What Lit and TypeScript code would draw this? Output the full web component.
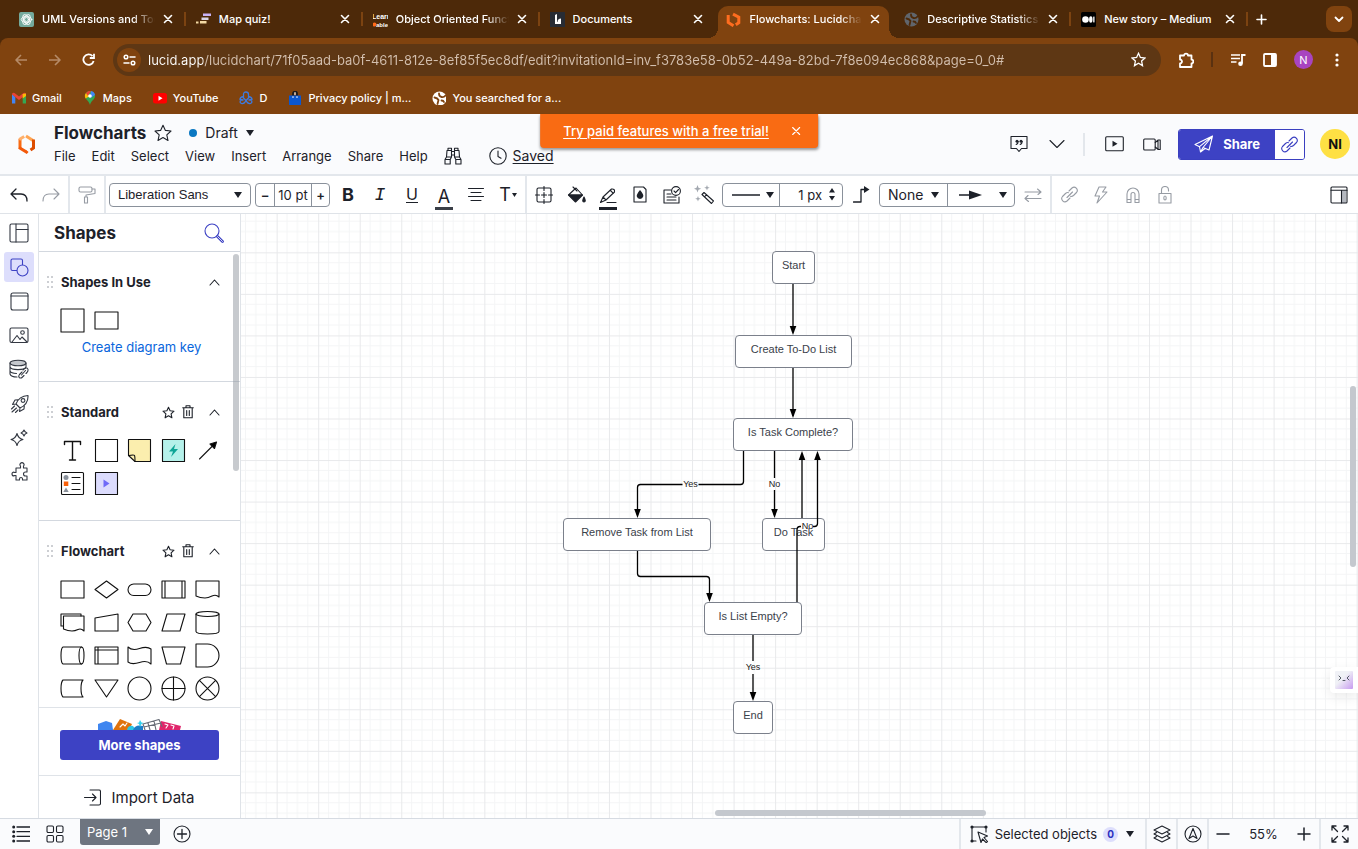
import { LitElement, html, svg, css, SVGTemplateResult } from "lit";
import { customElement, state } from "lit/decorators.js";

type Glyph = SVGTemplateResult;

/* Draws a glyph whose coordinates are in CSS pixels. */
const icon = (glyph: Glyph, w = 20, h = w) => html`<svg
  class="icon" width=${w} height=${h} viewBox="0 0 ${w} ${h}" aria-hidden="true">${glyph}</svg>`;

const base = css`
  :host { display: block; font-family: Inter, "Liberation Sans", sans-serif; color: #1d2129; font-size: 13px; }
  * { box-sizing: border-box; }
  button, input, select { font: inherit; color: inherit; background: none; border: 0; margin: 0; padding: 0; }
  button { display: flex; align-items: center; justify-content: center; cursor: pointer; }
  a { color: inherit; }
  .icon { display: block; flex: none; fill: none; stroke: currentColor; stroke-width: 1.1; stroke-linejoin: round; stroke-linecap: round; }
`;

/* ---------- glyphs ---------- */
const g = {
  close: svg`<path d="M1.500 1.500l7 7M8.500 1.500l-7 7" stroke-width="1.6"/>`,
  closeThin: svg`<path d="M1.500 1.500l7 7M8.500 1.500l-7 7" stroke-width="1.1"/>`,
  plus: svg`<path d="M5.500 1v9M1 5.500h9" stroke-width="1.6"/>`,
  chevDown: svg`<path d="M1.500 1.500L5 5l3.500-3.500" stroke-width="1.8"/>`,
  back: svg`<path d="M13 7H2M7 2L2 7l5 5" stroke-width="1.6" stroke-linecap="butt"/>`,
  forward: svg`<path d="M1 7h11M7 2l5 5-5 5" stroke-width="1.6" stroke-linecap="butt"/>`,
  reload: svg`<path d="M11.600 8A5.200 5.200 0 1 1 10.500 3.200M12 .8v4.200H7.800" stroke-width="1.8" stroke-linecap="butt" stroke-linejoin="miter"/>`,
  tune: svg`<g stroke-width="1.5"><circle cx="3" cy="3" r="1.800"/><path d="M7 3h5"/><circle cx="10" cy="9" r="1.800"/><path d="M1 9h5"/></g>`,
  starBar: svg`<path d="M7.500 1.300l1.900 4.200 4.600.5-3.400 3.100.9 4.500-4-2.300-4 2.300.9-4.500L1 6l4.600-.5z" stroke-width="1.300" stroke-linejoin="miter"/>`,
  puzzle: svg`<path d="M2 3.500h4a2 1.800 0 0 1 4 0H13.500V7.500a1.800 2 0 0 1 0 4V15H2v-3.500a2 2 0 0 0 0-4z" stroke-width="1.800"/>`,
  media: svg`<path d="M1 2h9M1 5.500h9M1 9h5.500" stroke-width="1.7" stroke-linecap="butt"/><path d="M12 10.500V2h3.500" stroke-width="1.8" stroke-linecap="butt" stroke-linejoin="miter"/><circle cx="10.500" cy="10.700" r="2.300" fill="currentColor" stroke="none"/>`,
  side: svg`<rect x="1" y="1" width="12" height="12" rx="1" stroke-width="1.800"/><path d="M8 1h5v12H8z" fill="currentColor" stroke="none"/>`,
  dots: svg`<g fill="currentColor" stroke="none"><circle cx="2" cy="2" r="1.600"/><circle cx="2" cy="7" r="1.600"/><circle cx="2" cy="12" r="1.600"/></g>`,
  lucid: svg`<g stroke="#ff6d1f" stroke-width="3" stroke-linejoin="miter" stroke-linecap="butt"><path d="M2.200 3v7.500l5.300 3.300"/><path d="M7 2.200l5.800 3v5.500l-3 2"/></g>`,
  caret: svg`<path d="M0 0h8L4 6z" fill="currentColor" stroke="none"/>`,
  star: svg`<path d="M9 1.200l2.400 5.200 5.600.6-4.200 3.800 1.200 5.700-5-2.900-5 2.900 1.200-5.700L1 7l5.600-.6z"/>`,
  binoc: svg`<path d="M4 3.500V1.200h3.500v2.300M10.500 3.500V1.200H14v2.300M3 3.500h4.500v6.500H2.500zM10.500 3.500H15l.5 6.500h-5zM7.500 4.500h3M7.500 8h3M2.500 10L1 12.500M15.500 10l1.500 2.500M1 12.500h5.200v4.500H1zM11.800 12.500H17v4.500h-5.200zM6.200 12.500L7.500 10M11.800 12.500L10.500 10"/>`,
  clock: svg`<circle cx="9" cy="9" r="8.200"/><path d="M9 4v5.500l3 1.800"/>`,
  comment: svg`<path d="M1 1.500h16v12h-5.500L9 16.500l-2.500-3H1z"/><g fill="currentColor" stroke="none"><circle cx="7" cy="6.200" r="1.500"/><circle cx="11" cy="6.200" r="1.500"/></g><path d="M8.200 6.500q0 2-2 3M12.200 6.500q0 2-2 3" />`,
  chev: svg`<path d="M1 1.500l7 7 7-7"/>`,
  play: svg`<rect x=".7" y=".7" width="17.600" height="14" rx="1"/><path d="M7.500 4.700v6l5-3z" fill="currentColor" stroke="none"/>`,
  camera: svg`<rect x=".7" y="2" width="11.500" height="11" rx="1"/><path d="M12.200 5.500l3-2.500h2v9.500h-2l-3-2.500M15 3v9.500"/>`,
  plane: svg`<path d="M18.500 1L1 9.500l4.500 2.200L18.500 1l-3.500 14-6-2.500L18.500 1M5.500 11.700l1 5.300 2.500-4.500M6.500 17l4.500-3.500"/>`,
  link: svg`<path d="M6 11.500l5.500-5.500M8 5l3-3a3.200 3.200 0 0 1 4.500 4.500l-3 3q-1.500 1.300-3 .8M9 12l-3 3a3.200 3.200 0 0 1-4.500-4.500l3-3q1.500-1.300 3-.8"/>`,
  undo: svg`<path d="M6 1L1 6l5 5M1.500 6H11q6 0 6 7" stroke-width="1.300"/>`,
  redo: svg`<path d="M12 1l5 5-5 5M16.500 6H7q-6 0-6 7"/>`,
  paint: svg`<rect x="1" y="1" width="13" height="5" rx="1.500"/><path d="M14 3h3v4.500l-9 1.500v2M6.500 11h3v6h-3z"/>`,
  align: svg`<path d="M.5 1.500h15M3 5.500h10M.5 9.500h15M3 13.500h10"/>`,
  frame: svg`<rect x="2" y="2" width="14" height="14" rx="1.500"/><path d="M9 .5v4M9 13.500v4M.5 9h4M13.500 9h4M9 6.500v5M6.500 9h5"/>`,
  fill: svg`<path d="M1.500 9L9 2l6.500 7z"/><path d="M1.500 9h14L8.500 16z" fill="currentColor"/><path d="M6 1l4 4M17 11q2.500 5 0 5t0-5" fill="currentColor"/>`,
  pen: svg`<path d="M1.500 14.500L4 9l8.500-8q3.500-.5 3 3L7 12zM4 9l3 3M11.500 2.500l2.800 2.800M8 14.500h9"/><path d="M0 20.500h18" stroke-width="3" stroke-linecap="butt"/>`,
  drop: svg`<path d="M1 1h9.500L13 3.500V16H1z"/><path d="M7 4q4 4.500 3.200 6.500a3.300 3.300 0 0 1-6.400 0Q3.200 8.500 7 4z" fill="currentColor" stroke="none"/>`,
  task: svg`<path d="M8 4H1v13h15v-6M4 8h4M4 11h9M4 14h9"/><circle cx="13" cy="5" r="4.400"/><path d="M11 5l1.600 1.600L15.500 3.500"/>`,
  wand: svg`<path d="M8 9.500L10 7.500l9.500 8.500-2 2.500zM10.500 12l2-2.300"/><g fill="#a3a8b0" stroke="none"><path d="M3.500 0l1 2.700L7.200 3.700l-2.700 1L3.500 7.500l-1-2.800L0 3.700l2.500-1zM13 0l.7 2 2 .7-2 .8-.7 2-.8-2-2-.8 2-.7zM4 11l.7 2 2 .7-2 .8L4 16.500l-.8-2-2-.8 2-.7z"/></g>`,
  line: svg`<path d="M0 1h28" stroke-width="1.300"/>`,
  spin: svg`<path d="M0 4.500h6L3 0zM0 8h6l-3 4.500z" fill="currentColor" stroke="none"/>`,
  elbow: svg`<path d="M.5 16H8V3.500h5" stroke-width="1.300"/><path d="M11 0l5.500 3.500L11 7z" fill="currentColor" stroke="none"/>`,
  arrow: svg`<path d="M0 5h12" stroke-width="1.600"/><path d="M10 .5L23 5 10 9.500z" fill="currentColor" stroke="none"/>`,
  swap: svg`<path d="M1 4h16l-3.500-3M17 4l-3 2.500M17 10.500H1l3-3M1 10.500l3.500 3"/>`,
  bolt: svg`<path d="M6 1h7L9.500 6H14L4 17l2.500-7H2z"/>`,
  magnet: svg`<path d="M1 15.500V7a6 6 0 0 1 12 0v8.500H9V7.500a2 2 0 0 0-4 0v8zM1 12.500h4M9 12.500h4"/>`,
  lock: svg`<rect x="1" y="7.500" width="12" height="9.500"/><path d="M3.500 7.500V4a3.500 3.500 0 0 1 7 0v1"/><ellipse cx="7" cy="12" rx="1.200" ry="2"/>`,
  dock: svg`<path d="M12 4.500h4V17h-4z" fill="#b4b8bf" stroke="none"/><rect x="1" y="1" width="16" height="16" rx="1"/><path d="M1 4.200h16M11.500 4.200V17"/>`,
  template: svg`<rect x="1" y="1" width="18" height="18" rx="1.500"/><path d="M7 1v18M7 6.500h12"/>`,
  shapes: svg`<rect x="1" y="1" width="11.500" height="11.500" rx="1.500"/><circle cx="12.500" cy="12.500" r="5.500" fill="#dddefc"/>`,
  container: svg`<rect x="1" y="1" width="17" height="17" rx="2"/><path d="M1 4h17"/>`,
  image: svg`<rect x="1" y="1" width="18" height="14.500" rx="1.500"/><path d="M3 15l5-6.500 3 4 2-2.500 5 5"/><circle cx="13.500" cy="5.500" r="1.800"/>`,
  data: svg`<ellipse cx="9" cy="4" rx="8" ry="2.800" fill="#c5c8cd"/><path d="M1 4v11q1 3 7 3M17 4v4M1 8q1 2.600 8 2.600t8-2.600M1 12q1 2.300 6.500 2.500"/><path d="M12.500 16l4-4.500M14 11l1.500-1.500q3-1.500 3.500 1 .3 1.500-1 3l-1 1M13 13l-2.500 2.500q-1.500 2 0 3.200 1.500.9 3-.7l1.500-1.500"/>`,
  rocket: svg`<path d="M6 10Q9 2 18 1.500 18.500 10 10 14zM6 10l-3.500.5L5 6l3-.3M10 14l-.5 3.500L14 15l.3-3M1.500 15l3-3M2 18l4.500-4M5.500 18.500L8 16"/><circle cx="13" cy="6.500" r="1.900"/>`,
  spark: svg`<path d="M7 4.500q1.200 5 6 6-4.800 1-6 6-1.200-5-6-6 4.800-1 6-6zM14 1q.6 2.200 3 3-2.400.8-3 3-.6-2.200-3-3 2.400-.8 3-3z"/>`,
  plugin: svg`<path d="M6 6h4.500V4a2 2 0 1 1 3 0v2H17v4h-1.500a2 2 0 1 0 0 4H17v4h-4.500v-1a1.500 1.500 0 1 0-3 0v1H6v-4.500H4v.5a1.800 1.800 0 1 1 0-4v.5h2z"/>`,
  search: svg`<circle cx="8" cy="8" r="7"/><path d="M13.500 13.500l5 5" stroke-width="2.800"/><path d="M13.500 13.500l5 5" stroke="#fff" stroke-width=".8"/>`,
  grip: svg`<g fill="#8d939c" stroke="none">${[1, 6, 11].map((y) => svg`<circle cx="1" cy=${y} r=".8"/><circle cx="5" cy=${y} r=".8"/>`)}</g>`,
  starSmall: svg`<path d="M6.500 1.200l1.600 3.600 3.900.4-2.900 2.700.8 3.900-3.400-2-3.400 2 .8-3.900L1 5.200l3.900-.4z"/>`,
  trash: svg`<path d="M.7 2.700h10.600M4 2.700V.8h4v1.900M1.800 2.700v10h8.400v-10M4.700 5.500v5M7.300 5.500v5"/>`,
  up: svg`<path d="M1 6l4.500-5L10 6"/>`,
  import: svg`<path d="M.5 8.500H12M8.500 5l3.500 3.500L8.500 12M6 1h9q1.500 0 1.500 1.500v12q0 1.500-1.500 1.500H6"/>`,
  list: svg`<path d="M5 2h13M5 6.700h13M5 11.300h13M5 16h13" stroke-width="1.300"/><g fill="currentColor" stroke="none"><circle cx="1.700" cy="2" r="1.500"/><circle cx="1.700" cy="6.700" r="1.500"/><circle cx="1.700" cy="11.300" r="1.500"/><circle cx="1.700" cy="16" r="1.500"/></g>`,
  tiles: svg`<rect x="1" y="1" width="6.500" height="6.500" rx="1.200"/><rect x="10.500" y="1" width="6.500" height="6.500" rx="1.200"/><rect x="1" y="10.500" width="6.500" height="6.500" rx="1.200"/><rect x="10.500" y="10.500" width="6.500" height="6.500" rx="1.200"/>`,
  addRound: svg`<circle cx="9" cy="9" r="8"/><path d="M9 4.500v9M4.500 9h9" stroke-width="1.300"/>`,
  select: svg`<path d="M6 16H2V2h14v5"/><path d="M8 7l9.500 4-3.500 1.500 3.500 4-1.300 1.200-3.700-3.700-1.500 3.500z"/><g fill="currentColor" stroke="none"><circle cx="2" cy="2" r="1.600"/><circle cx="16" cy="2" r="1.600"/><circle cx="2" cy="16" r="1.600"/></g>`,
  layers: svg`<path d="M9 1l8 4-8 4-8-4zM3.500 7.500L1 9l8 4 8-4-2.500-1.500M3.500 11.500L1 13l8 4 8-4-2.500-1.500"/>`,
  compass: svg`<circle cx="9" cy="9" r="8"/><path d="M9 3.500l4 10-4-2.500-4 2.500z"/>`,
  minus: svg`<path d="M1 7h12" stroke-width="1.500"/>`,
  plusBig: svg`<path d="M1 7h12M7 1v12" stroke-width="1.500"/>`,
  full: svg`<path d="M1 5V1h4M1 1l5.500 5.500M13 1h4v4M17 1l-5.500 5.500M1 13v4h4M1 17l5.500-5.500M17 13v4h-4M17 17l-5.500-5.500" stroke-width="1.300"/>`,
  globe: svg`<circle cx="7.500" cy="7.500" r="7" fill="currentColor" stroke="none"/><path d="M2.500 6.500q3 .5 4 2.500l-1 4M7 2.500q0 3 2.500 3.500t4-1.500M9.500 9.500q2 0 2.500 1.500" stroke="var(--cut)" stroke-width="1.800" fill="none"/>`,
};

const fav = {
  gpt: svg`<rect width="15" height="15" rx="2" fill="#74aa9c" stroke="none"/><g stroke="#fff" stroke-width=".9"><circle cx="7.500" cy="7.500" r="2"/><ellipse cx="7.500" cy="7.500" rx="5.300" ry="3"/><ellipse cx="7.500" cy="7.500" rx="5.300" ry="3" transform="rotate(60 7.500 7.500)"/><ellipse cx="7.500" cy="7.500" rx="5.300" ry="3" transform="rotate(120 7.500 7.500)"/></g>`,
  quiz: svg`<g stroke="none"><rect x="7" y="1.500" width="8.500" height="2.500" fill="#c9b2f5"/><rect x="5.500" y="5.500" width="7" height="2.500" fill="#d7d3e6"/><rect x="4" y="9" width="6.500" height="2.500" fill="#f3d9a4"/><rect x="0" y="9.500" width="2.500" height="2" fill="#f3d9a4"/></g>`,
  learn: svg`<g fill="#fff" stroke="none" font-family="Liberation Sans, sans-serif" font-weight="700" font-size="7"><text x="-1" y="7">Learn</text><text x="3" y="14.500" font-size="6">able</text></g><circle cx="1.500" cy="12.500" r="2" fill="#ff6a1a" stroke="none"/>`,
  docs: svg`<rect width="15" height="15" fill="#282c34" stroke="none"/><path d="M5 3l2-1v8H5zM7.500 10q0-3.500 3.500-3.500V12H5V9.500z" fill="#fff" stroke="none"/>`,
  medium: svg`<rect width="15" height="15" rx="1.500" fill="#000" stroke="none"/><g fill="#fff" stroke="none"><circle cx="4.500" cy="7.500" r="3.300"/><ellipse cx="9.800" cy="7.500" rx="1.700" ry="3.200"/><rect x="12.200" y="4.600" width="1.300" height="5.800"/></g>`,
  gmail: svg`<g stroke="none"><path d="M0 3v9.500h3.300V6z" fill="#4285f4"/><path d="M10.700 6v6.500H14V3z" fill="#34a853"/><path d="M0 3.500Q0 1 2.500 2L7 5.500 11.500 2Q14 1 14 3.500L7 9z" fill="#ea4335"/><path d="M10.700 3L14 2.500V5l-3.300 2.500z" fill="#fbbc04"/></g>`,
  maps: svg`<g stroke="none"><path d="M7 0a5 5 0 0 1 5 5c0 3.500-4 4.500-5 9-1-4.500-5-5.500-5-9a5 5 0 0 1 5-5z" fill="#34a853"/><path d="M2.500 7.500A5 5 0 0 1 3 2l4 3z" fill="#fbbc04"/><path d="M3 2a5 5 0 0 1 5-2L5 5z" fill="#ea4335"/><path d="M8 0a5 5 0 0 1 4 4L7 7.500z" fill="#4285f4"/><circle cx="7" cy="5" r="1.800" fill="#fff"/></g>`,
  youtube: svg`<g stroke="none"><rect y="2" width="14" height="10.500" rx="2.500" fill="#f00"/><path d="M5.500 4.700v5l4-2.500z" fill="#fff"/></g>`,
  knot: svg`<g stroke="#3c7be0" stroke-width="1.300"><path d="M4.500 7V3.500Q4.500 1 7 1t2.500 2.500V7M9.500 5.500q3.500.5 3.500 3L10 9M4.500 5.500Q1 6 1 8.500L4 9M7 9.500q-2 4-4.500 3T2 9M7 9.500q2 4 4.500 3T12 9M5 7.500l2 2 2-2"/></g>`,
  bag: svg`<path d="M5 5V2.500a2 2 0 0 1 4 0V5" stroke="#1b1b1f" stroke-width="1.800"/><path d="M1 4.500h12V14H1z" fill="#0b57d0" stroke="none"/><path d="M4.500 6h1M8.500 6h1M7 1.500v2" stroke="#fff"/>`,
};

/* ---------- browser window chrome ---------- */
@customElement("browser-chrome")
class BrowserChrome extends LitElement {
  static styles = [base, css`
    :host { --frame: #4d2909; --bar: #80430f; --cut: #4d2909; background: var(--frame); color: #fff; font-size: 11px; font-weight: 500; }
    .strip { display: flex; height: 38px; padding: 6px 0 0 9px; }
    .tabs { display: flex; flex: 1; min-width: 0; }
    .tab { position: relative; flex: 1 1 0; min-width: 0; display: flex; align-items: center; gap: 8px; padding: 0 13px 6px 10px; }
    .tab::after { content: ""; position: absolute; right: 0; top: 6px; width: 2px; height: 14px; background: #7c4311; }
    .tab.bare::after { display: none; }
    .tab.active { margin: 0 5px 0 2px; padding: 0 9px 6px 8px; background: var(--bar); border-radius: 10px 10px 0 0; }
    .tab.active::before, .tab.active::after { content: ""; position: absolute; display: block; top: auto; bottom: 0; width: 10px; height: 10px; background: radial-gradient(circle at 0 0, transparent 10px, var(--bar) 10px); }
    .tab.active::before { left: -10px; }
    .tab.active::after { right: -10px; background: radial-gradient(circle at 100% 0, transparent 10px, var(--bar) 10px); }
    .title { flex: 1; min-width: 0; overflow: hidden; white-space: nowrap; line-height: 18px; }
    .title.fade { mask-image: linear-gradient(90deg, #000 80%, transparent); }
    .end { flex: 0 0 110px; display: flex; justify-content: space-between; padding: 0 6px 6px 8px; align-items: center; }
    .more { width: 26px; height: 26px; border-radius: 8px; background: var(--bar); }
    .gray { color: #60656c; }
    .bar { background: var(--bar); border-radius: 8px 8px 0 0; height: 43px; display: flex; align-items: center; padding: 0 19px 0 14px; }
    .nav { display: flex; gap: 20px; align-items: center; color: #b58b68; }
    .nav button:last-child { color: #fff; }
    .omni { flex: 1; margin: 0 17px 0 18px; height: 32px; border-radius: 16px; background: #5e3714; display: flex; align-items: center; padding: 0 15px 0 4px; }
    .site { width: 24px; height: 24px; border-radius: 12px; background: var(--bar); margin-right: 7px; }
    .url { flex: 1; min-width: 0; font-size: 13px; font-weight: 400; height: 24px; outline: 0; color: #dac8b9;
      background: linear-gradient(90deg, #fff 55px, #d3bfae 55px); background-clip: text; -webkit-background-clip: text; -webkit-text-fill-color: transparent; }
    .rule { width: 2px; height: 15px; background: #5a3110; }
    .tools { display: flex; align-items: center; gap: 17px; }
    .me { width: 19px; height: 19px; border-radius: 10px; background: #a844c0; font-weight: 400; }
    .tools .kebab { margin-left: 5px; }
    .marks { background: var(--bar); --cut: var(--bar); height: 33px; display: flex; align-items: center; gap: 21px; padding: 0 12px; }
    .mark { display: flex; align-items: center; gap: 6px; text-decoration: none; line-height: 18px; }
  `];
  render() {
    const tabs: [string, Glyph, string][] = [
      ["UML Versions and Too", fav.gpt, "fade"], ["Map quiz!", fav.quiz, ""],
      ["Object Oriented Funct", fav.learn, "fade"], ["Documents", fav.docs, "bare"],
      ["Flowcharts: Lucidcha", g.lucid, "fade active"], ["Descriptive Statistics", g.globe, "fade gray"],
      ["New story – Medium", fav.medium, ""],
    ];
    const marks: [string, Glyph][] = [
      ["Gmail", fav.gmail], ["Maps", fav.maps], ["YouTube", fav.youtube], ["D", fav.knot],
      ["Privacy policy | m...", fav.bag], ["You searched for a...", g.globe],
    ];
    return html`
      <div class="strip">
        <div class="tabs">${tabs.map(([t, f, k]) => html`
          <div class="tab ${k.includes("active") ? "active" : ""} ${k === "bare" ? "bare" : ""}">
            <span class=${k.includes("gray") ? "gray" : ""}>${icon(f, 15)}</span>
            <span class="title ${k.includes("fade") ? "fade" : ""}">${t}</span>
            <button aria-label="Close ${t}">${icon(g.close, 10)}</button>
          </div>`)}</div>
        <div class="end"><button aria-label="New tab">${icon(g.plus, 11)}</button>
          <button class="more" aria-label="Search tabs">${icon(g.chevDown, 10, 7)}</button></div>
      </div>
      <div class="bar">
        <div class="nav"><button aria-label="Back">${icon(g.back, 14)}</button><button aria-label="Forward">${icon(g.forward, 14)}</button>
          <button aria-label="Reload">${icon(g.reload, 13)}</button></div>
        <div class="omni">
          <button class="site" aria-label="Site information">${icon(g.tune, 13, 12)}</button>
          <input class="url" aria-label="Address" .value=${"lucid.app/lucidchart/71f05aad-ba0f-4611-812e-8ef85f5ec8df/edit?invitationId=inv_f3783e58-0b52-449a-82bd-7f8e094ec868&page=0_0#"} />
          <button aria-label="Bookmark">${icon(g.starBar, 15)}</button>
        </div>
        <div class="tools">
          <button aria-label="Extensions">${icon(g.puzzle, 16)}</button><span class="rule"></span>
          <button aria-label="Media">${icon(g.media, 16, 14)}</button>
          <button aria-label="Side panel">${icon(g.side, 14)}</button>
          <button class="me" aria-label="Profile N">N</button>
          <button class="kebab" aria-label="Menu">${icon(g.dots, 4, 14)}</button>
        </div>
      </div>
      <div class="marks">${marks.map(([t, f]) => html`<a class="mark" href="#">${icon(f, 14)}${t}</a>`)}</div>`;
  }
}

/* ---------- document header ---------- */
@customElement("doc-header")
class DocHeader extends LitElement {
  static styles = [base, css`
    :host { position: relative; background: #fafbfd; border-bottom: 2px solid #e3e7ec; }
    .row { display: flex; align-items: center; height: 60px; padding: 0 8px 0 18px; }
    .main { margin-left: 18px; display: flex; flex-direction: column; gap: 3px; flex: 1; }
    .line { display: flex; align-items: center; height: 20px; }
    .title { font-size: 17px; font-weight: 700; margin: 0 8px 0 0; line-height: 20px; }
    .dot { width: 8px; height: 8px; border-radius: 4px; background: #0a78c2; margin: 0 8px 0 17px; }
    .draft { gap: 8px; font-size: 14px; }
    .menu { gap: 16px; }
    .saved { gap: 6px; text-decoration: underline; text-underline-offset: 2px; margin-left: 11px; font-size: 14px; }
    .right { display: flex; align-items: center; }
    .sep { width: 2px; height: 23px; background: #e3e7ec; margin: 0 20px 0 18px; }
    .share { display: flex; height: 31px; margin: 0 15px 0 17px; border: 1px solid #3a3fc0; border-radius: 3px; overflow: hidden; color: #3a3fc0; }
    .go { background: #3d42c4; color: #fff; gap: 9px; padding: 0 15px; font-weight: 700; }
    .copy { width: 29px; background: #fff; }
    .user { width: 30px; height: 30px; border-radius: 15px; background: #fee044; font-weight: 700; color: #111; }
    .chev { margin: 0 0 0 21px; }
    .cam { margin-left: 19px; }
    .banner { position: absolute; top: 0; left: 50%; transform: translateX(-50%); height: 34px; padding: 0 17px 0 23px; gap: 22px; background: #f96b13; color: #fff; border-radius: 0 0 4px 4px; box-shadow: 0 2px 3px #0006; display: flex; align-items: center; white-space: nowrap; font-weight: 500; }
    .banner a { text-underline-offset: 2px; }
  `];
  render() {
    return html`
      <header class="row">
        ${icon(svg`<g stroke-width="3" stroke-linejoin="miter" stroke-linecap="butt"><path d="M2 5v9.500" stroke="#f96b13"/><path d="M1 13.500l7.500 4.500 1-1" stroke="#f3590a"/><path d="M1.200 5.500l5-3" stroke="#ffb06b"/><path d="M8 2l7 4.500" stroke="#ffa552"/><path d="M15.500 5.500v8.500l-3 2" stroke="#dd4d00"/></g>`, 18, 20)}
        <div class="main">
          <div class="line"><h1 class="title">Flowcharts</h1><button aria-label="Favorite">${icon(g.star, 18)}</button>
            <span class="dot"></span><button class="draft">Draft ${icon(g.caret, 8, 6)}</button></div>
          <nav class="line menu">
            ${["File", "Edit", "Select", "View", "Insert", "Arrange", "Share", "Help"].map((m) => html`<button>${m}</button>`)}
            <button aria-label="Find">${icon(g.binoc, 18)}</button>
            <button class="saved">${icon(g.clock, 18)} <span>Saved</span></button>
          </nav>
        </div>
        <div class="right">
          <button aria-label="Comments">${icon(g.comment, 18)}</button>
          <button class="chev" aria-label="More">${icon(g.chev, 16, 10)}</button>
          <span class="sep"></span>
          <button aria-label="Present">${icon(g.play, 19, 16)}</button>
          <button class="cam" aria-label="Record">${icon(g.camera, 18, 15)}</button>
          <div class="share"><button class="go">${icon(g.plane, 20, 18)}Share</button>
            <button class="copy" aria-label="Copy link">${icon(g.link, 17)}</button></div>
          <button class="user" aria-label="Account NI">NI</button>
        </div>
      </header>
      <div class="banner"><a href="#">Try paid features with a free trial!</a>
        <button aria-label="Dismiss">${icon(g.closeThin, 10)}</button></div>`;
  }
}

/* ---------- formatting toolbar ---------- */
@customElement("format-bar")
class FormatBar extends LitElement {
  static styles = [base, css`
    :host { background: #fff; border-bottom: 1px solid #dfe3e8; }
    .bar { display: flex; align-items: stretch; height: 37px; padding-left: 3px; }
    .tool { width: 32px; }
    .off { color: #979ca4; }
    .sep { width: 2px; background: #e3e7ec; flex: none; margin: 0 1px; }
    .box { align-self: center; height: 24px; display: flex; flex: none; border: 1px solid #8a919b; border-radius: 4px; background: #fff; margin: 0 2px; }
    .box > * + * { border-left: 1px solid #8a919b; }
    .field { position: relative; display: flex; align-items: center; flex: none; }
    .field select { appearance: none; width: 100%; height: 100%; padding: 0 8px; outline: 0; }
    .field > .icon { position: absolute; right: 8px; pointer-events: none; }
    .font { width: 140px; font-family: "Liberation Sans", sans-serif; }
    .step { width: 18px; font-weight: 600; }
    .size { width: 37px; text-align: center; min-width: 0; }
    .line { width: 56px; gap: 6px; padding-left: 3px; }
    .width { width: 63px; display: flex; align-items: center; padding-right: 7px; }
    .width input { text-align: right; padding-right: 7px; flex: 1; min-width: 0; }
    .none { width: 67px; font-size: 14px; }
    .ends { width: 67px; gap: 17px; padding-left: 4px; }
    .big { font-size: 18px; font-weight: 400; line-height: 20px; }
    .b { font-weight: 700; }
    .i { font-style: italic; font-family: "Liberation Mono", monospace; }
    .u { border-bottom: 1px solid #1d2129; font-size: 16px; line-height: 16px; }
    .mark { border-bottom: 3px solid #3a3f47; width: 18px; text-align: center; margin-top: 8px; line-height: 20px; }
    .pen { padding-top: 8px; }
    .t { gap: 1px; }
    .last { margin-left: auto; width: 38px; }
  `];
  render() {
    const t = (label: string, body: unknown, cls = "") => html`<button class="tool ${cls}" aria-label=${label}>${body}</button>`;
    const caret = icon(g.caret, 8, 6);
    return html`<div class="bar" role="toolbar">
      ${t("Undo", icon(g.undo, 18, 14))}${t("Redo", icon(g.redo, 18, 14), "off")}<span class="sep"></span>
      ${t("Format painter", icon(g.paint, 18), "off")}<span class="sep"></span>
      <div class="box"><label class="field font"><select aria-label="Font"><option>Liberation Sans</option></select>${caret}</label></div>
      <div class="box"><button class="step">−</button><input class="size" aria-label="Font size" .value=${"10 pt"} /><button class="step">+</button></div>
      ${t("Bold", html`<span class="big b">B</span>`)}${t("Italic", html`<span class="big i">I</span>`)}
      ${t("Underline", html`<span class="big u">U</span>`)}${t("Text color", html`<span class="big mark">A</span>`)}
      ${t("Align", icon(g.align, 16, 15))}${t("Text options", html`<span class="big">T</span>${icon(svg`<path d="M0 0h5L2.500 4z" fill="currentColor" stroke="none"/>`, 5, 4)}`, "t")}
      <span class="sep"></span>
      ${t("Position", icon(g.frame, 18))}${t("Fill", icon(g.fill, 19, 17))}${t("Line color", icon(g.pen, 18, 22), "pen")}
      ${t("Opacity", icon(g.drop, 14, 17))}${t("Task card", icon(g.task, 18))}${t("Magic", icon(g.wand, 20))}
      <div class="box"><button class="line" aria-label="Line style">${icon(g.line, 28, 2)}${caret}</button>
        <div class="width"><input aria-label="Line width" .value=${"1 px"} />${icon(g.spin, 6, 13)}</div></div>
      ${t("Line shape", icon(g.elbow, 17))}
      <div class="box"><label class="field none"><select aria-label="Line start"><option>None</option></select>${caret}</label>
        <button class="ends" aria-label="Line end">${icon(g.arrow, 23, 10)}${caret}</button></div>
      ${t("Swap ends", icon(g.swap, 18, 14), "off")}
      <span class="sep"></span>
      ${t("Link", icon(g.link, 17), "off")}${t("Action", icon(g.bolt, 16, 18), "off")}${t("Magnet", icon(g.magnet, 14, 16), "off")}${t("Lock", icon(g.lock, 14, 18), "off")}
      ${t("Dock panel", icon(g.dock, 18), "last")}
    </div>`;
  }
}

/* ---------- side rail and shape library ---------- */
const flowShapes: Glyph[] = [
  svg`<path d="M1 4h23v17H1z"/>`, svg`<path d="M12.500 4L24 12.500 12.500 21 1 12.500z"/>`,
  svg`<rect x="1" y="7" width="23" height="11.500" rx="5.700"/>`, svg`<path d="M1 4h23v17H1zM4 4v17M21 4v17"/>`,
  svg`<path d="M1 4h23v16q-3-3-7-1t-7 2q-5 0-9-2z"/>`,
  svg`<path d="M3 16H1V4h20v2"/><path d="M3.500 6H24v15q-3-3-6-1.500t-6 1.500q-4 0-8.500-2z"/>`,
  svg`<path d="M1 8l23-4v17H1z"/>`, svg`<path d="M6 4h13l5 8.500-5 8.500H6l-5-8.500z"/>`,
  svg`<path d="M6 4h18l-5 17H1z"/>`, svg`<path d="M1 4v17.500q0 2.500 11.500 2.500T24 21.500V4"/><ellipse cx="12.500" cy="4" rx="11.500" ry="2.500"/>`,
  svg`<path d="M21.500 4H3Q1 5 1 12.500T3 21h18.500"/><ellipse cx="21.500" cy="12.500" rx="2.500" ry="8.500"/>`,
  svg`<path d="M1 4h23v17H1zM1 7h23M4 4v17"/>`, svg`<path d="M1 4q4 4 11.500 1.500T24 6v15q-4-4-11.500-1.500T1 19z"/>`,
  svg`<path d="M1 4h23l-4.500 17h-14z"/>`, svg`<path d="M1 1h11.500a11.500 11.500 0 0 1 0 23H1z"/>`,
  svg`<path d="M23 4H3Q1 6 1 12.500T3 21h20q-2-2-2-8.500T23 4z"/>`, svg`<path d="M1 4h23L12.500 21z"/>`,
  svg`<circle cx="12.500" cy="12.500" r="11.500"/>`, svg`<circle cx="12.500" cy="12.500" r="11.500"/><path d="M1 12.500h23M12.500 1v23"/>`,
  svg`<circle cx="12.500" cy="12.500" r="11.500"/><path d="M4.400 4.400l16.200 16.200M20.600 4.400L4.400 20.600"/>`,
];
const stdShapes: Glyph[] = [
  svg`<path d="M4.500 6.500V3.500h16v3M12.500 3.500v18.500M9.500 22h6" stroke-width="1.400"/>`,
  svg`<path d="M1.500 1.500h22v22h-22z"/>`,
  svg`<path d="M1.500 1.500h22v22H8L1.500 17.500z" fill="#fbeeae"/><path d="M2 17.500q5-1 5.500 0t.5 6"/>`,
  svg`<path d="M1.500 1.500h22v22h-22z" fill="#b5f1ea"/><path d="M14.500 6L8 13.500h4L10 19l7-8h-4z" fill="#0ea596" stroke="none"/>`,
  svg`<path d="M4.500 21L20 5.500"/><path d="M21.500 4l-2 6.500-4.500-4.500z" fill="#000"/>`,
  svg`<rect x="1.500" y="1.500" width="22" height="22" rx="1"/><circle cx="6" cy="6.500" r="2.500" fill="#8a919b" stroke="none"/><path d="M3.800 10.500h4.500V15H3.800z" fill="#f9600a" stroke="none"/><path d="M3.300 21L6 16.500 8.700 21z" fill="#8a919b" stroke="none"/><path d="M12 6.500h8M12 12.500h8M12 18.500h8"/>`,
  svg`<path d="M1.500 1.500h22v22h-22z" fill="#dcdcfd"/><path d="M9.500 8.500v8l6-4z" fill="#6f6af8" stroke="none"/>`,
];

@customElement("shape-panel")
class ShapePanel extends LitElement {
  @state() private active = 1;
  static styles = [base, css`
    :host { display: flex; flex: none; min-height: 0; background: #fff; }
    .rail { width: 39px; border-right: 1px solid #dfe3e8; padding: 4px; display: flex; flex-direction: column; gap: 4px; }
    .rail button { width: 30px; height: 30px; border-radius: 3px; color: #333842; }
    .rail button.on { background: #dddefc; color: #3d42c4; }
    .panel { width: 202px; border-right: 1px solid #dfe3e8; display: flex; flex-direction: column; min-height: 0; }
    .head { display: flex; align-items: center; justify-content: space-between; height: 38px; flex: none; padding: 0 16px 0 15px; border-bottom: 1px solid #d3d8df; }
    h2 { font-size: 17px; font-weight: 700; margin: 0; }
    .head button { color: #3d42c4; }
    .scroll { position: relative; flex: 1; min-height: 0; overflow: hidden; }
    .thumb { position: absolute; right: 1px; top: 2px; width: 6px; height: 217px; border-radius: 3px; background: #8f959e80; }
    section { padding: 20px 16px 20px 8px; border-bottom: 1px solid #d3d8df; }
    section:last-of-type { border: 0; }
    .name { display: flex; align-items: center; height: 20px; margin-bottom: 12px; }
    h3 { font-size: 13px; font-weight: 700; margin: 0 auto 0 8px; white-space: nowrap; }
    .name button { margin-left: 7px; }
    .name button:last-child { margin-left: 11px; padding: 2px 4px; }
    .grid { display: grid; grid-template-columns: repeat(5, 1fr); grid-auto-rows: 33px; margin: 0 0 0 9px; color: #111; }
    .key { display: flex; justify-content: center; line-height: 20px; color: #0a66dc; text-decoration: none; margin: 0 0 4px 12px; }
    .more { flex: none; border-top: 1px solid #dfe3e8; padding: 11px 21px 15px; display: flex; flex-direction: column; align-items: center; }
    .more button { width: 100%; height: 30px; border-radius: 3px; background: #3d42c4; color: #fff; font-weight: 700; }
    .import { flex: none; height: 43px; border-top: 1px solid #dfe3e8; gap: 10px; font-size: 15px; }
  `];
  private section(name: string, shapes: Glyph[], full = true, extra: unknown = "") {
    return html`<section>
      <div class="name">${icon(g.grip, 6, 12)}<h3>${name}</h3>
        ${full ? html`<button aria-label="Favorite ${name}">${icon(g.starSmall, 13)}</button><button aria-label="Remove ${name}">${icon(g.trash, 12, 14)}</button>` : ""}
        <button aria-label="Collapse ${name}">${icon(g.up, 11, 7)}</button></div>
      <div class="grid">${shapes.map((s, i) => html`<button aria-label="${name} shape ${i + 1}">${icon(s, 25)}</button>`)}</div>
      ${extra}</section>`;
  }
  render() {
    const rail: [string, Glyph, number, number][] = [
      ["Templates", g.template, 20, 20], ["Shapes", g.shapes, 19, 19], ["Containers", g.container, 19, 19], ["Images", g.image, 20, 17],
      ["Data", g.data, 20, 20], ["Quick start", g.rocket, 19, 19], ["Assist", g.spark, 18, 17], ["Plugins", g.plugin, 19, 19],
    ];
    return html`
      <nav class="rail">${rail.map(([n, s, w, h], i) => html`<button class=${i === this.active ? "on" : ""} aria-label=${n} @click=${() => (this.active = i)}>${icon(s, w, h)}</button>`)}</nav>
      <div class="panel">
        <div class="head"><h2>Shapes</h2><button aria-label="Search shapes">${icon(g.search, 20)}</button></div>
        <div class="scroll">
          ${this.section("Shapes In Use", [svg`<path d="M1 1h23v23H1z"/>`, svg`<path d="M1 4h23v17H1z"/>`], false, html`<a class="key" href="#">Create diagram key</a>`)}
          ${this.section("Standard", stdShapes)}
          ${this.section("Flowchart", flowShapes)}
          <div class="thumb"></div>
        </div>
        <div class="more">
          ${icon(svg`<g stroke="none"><path d="M1 11V5l8-3 6 2 1 7z" fill="#3f86f0"/><path d="M16 11L23 0l12 5-3 6z" fill="#e0730d"/><path d="M23 8l3-3 2 2 2-3" stroke="#fff"/><path d="M30 11q1-5 6-4l3 4z" fill="#2cc6e4"/><path d="M36 11q2-6 10-4v4z" fill="#1d7fc8"/><path d="M43 1l1.500 2.500L47 4l-2.500 1L43 8l-1-3-2-1 2-.5z" fill="#34d3ee"/><path d="M64 2l20 5-1 4H62z" fill="#e0256b"/></g><path d="M48 11l-2-6 16-4.500 3 7M47 8l17-4M51 4l2 7M57 2l2 9" stroke="#666c76"/><path d="M68 5l3 1-2 3M74 6l3 1-1 3" stroke="#fff"/>`, 85, 11)}
          <button>More shapes</button></div>
        <button class="import">${icon(g.import, 17)}Import Data</button>
      </div>`;
  }
}

/* ---------- diagram ---------- */
interface Node { label: string; x: number; y: number; w: number }
const nodes: Node[] = [
  { label: "Start", x: 531, y: 37, w: 43 }, { label: "Create To-Do List", x: 494, y: 121, w: 117 },
  { label: "Is Task Complete?", x: 492, y: 204, w: 120 }, { label: "Remove Task from List", x: 322, y: 304, w: 148 },
  { label: "Do Task", x: 521, y: 304, w: 63 }, { label: "Is List Empty?", x: 463, y: 388, w: 98 }, { label: "End", x: 492, y: 487, w: 40 },
];
const edges = [
  "M552 70V118", "M552 154V202",
  "M502.500 237V267.500q0 3-3 3H457.500M441.500 270.500H399.500q-3 0-3 3V301",
  "M533.500 237V264M533.500 276V301", "M561 304V240",
  "M556 388V316q0-3.500 3-3.500h1M572 312.500h1.500q3 0 3-3V240",
  "M396.500 337V359.500q0 3 3 3H465.500q3 0 3 3V385", "M512 421V447M512 460V484",
];
const heads: [number, number, number][] = [[552, 121, 1], [552, 204, 1], [396.5, 304, 1], [533.5, 304, 1], [561, 237, -1], [576.5, 237, -1], [468.5, 388, 1], [512, 487, 1]];
const notes: [string, number, number][] = [["Yes", 449.5, 273], ["No", 533.5, 273], ["No", 566.5, 315], ["Yes", 512, 456]];

@customElement("diagram-canvas")
class DiagramCanvas extends LitElement {
  static styles = [base, css`
    :host { position: relative; flex: 1; min-width: 0; overflow: hidden; background: #fff; font-family: "Liberation Sans", sans-serif; }
    .layer { position: absolute; inset: 0; width: 100%; height: 100%; pointer-events: none; }
    .node { position: absolute; height: 33px; border: 1px solid #7b808b; border-radius: 4px; background: #fff; display: flex; align-items: center; justify-content: center; font-size: 11px; line-height: 13px; padding-bottom: 4px; color: #3a414a; white-space: nowrap; }
    .edge { fill: none; stroke: #000; stroke-width: 1.3; }
    .note { font-size: 9px; text-anchor: middle; fill: #222; }
    .vbar, .hbar { position: absolute; background: #c4c8ce; border-radius: 3px; }
    .vbar { right: 2px; width: 6px; top: 28.500%; height: 30%; }
    .hbar { bottom: 2px; height: 6px; left: 42.400%; width: 24.300%; }
    .bot { position: absolute; right: 0; bottom: 125px; width: 28px; height: 26px; background: #fff; border-radius: 4px 0 0 4px; box-shadow: 0 4px 12px #00000014; }
  `];
  render() {
    const p = 41.54, m = p / 4;
    return html`
      <svg class="layer" aria-hidden="true"><defs><pattern id="grid" x="-5.900" y="-3.200" width=${p} height=${p} patternUnits="userSpaceOnUse">
        <path d="M${m} 0V${p}M${2 * m} 0V${p}M${3 * m} 0V${p}M0 ${m}H${p}M0 ${2 * m}H${p}M0 ${3 * m}H${p}" stroke="#f4f5f6" fill="none"/>
        <path d="M.5 0V${p}M0 .5H${p}" stroke="#e8e9eb" fill="none"/></pattern></defs>
        <rect width="100%" height="100%" fill="url(#grid)"/></svg>
      ${nodes.map((n) => html`<div class="node" style="left:${n.x}px;top:${n.y}px;width:${n.w}px">${n.label}</div>`)}
      <svg class="layer">
        ${edges.map((d) => svg`<path class="edge" d=${d}/>`)}
        ${heads.map(([x, y, s]) => svg`<path d="M${x} ${y}l-3.300 ${-9 * s}h6.600z"/>`)}
        ${notes.map(([s, x, y]) => svg`<text class="note" x=${x} y=${y}>${s}</text>`)}
      </svg>
      <div class="vbar"></div><div class="hbar"></div>
      <button class="bot" aria-label="Assistant">${icon(svg`<defs><linearGradient id="lav" x1="0" y1="0" x2="1" y2="1"><stop offset=".4" stop-color="#f0f1f6"/><stop offset="1" stop-color="#c79bf0"/></linearGradient></defs><rect width="18" height="18" rx="1" fill="url(#lav)" stroke="none"/><path d="M4 5l2 2-2 2M14 5l-2 2 2 2M8 9.500h2" stroke="#555b66" stroke-width="1"/>`, 18)}</button>`;
  }
}

/* ---------- status bar ---------- */
@customElement("status-bar")
class StatusBar extends LitElement {
  static styles = [base, css`
    :host { background: #fafbfd; border-top: 1px solid #d6dbe2; }
    .bar { display: flex; height: 30px; }
    .left { display: flex; align-items: center; flex: 1; padding-left: 12px; gap: 16px; }
    .page { align-self: flex-start; height: 26px; width: 80px; background: #6e7580; color: #fff; border-radius: 0 0 3px 3px; justify-content: space-between; padding: 0 7px; margin: 0 -3px 0 0; }
    .right { display: flex; }
    .right > * { border-left: 2px solid #e3e7ec; }
    .sel { padding: 0 11px 0 9px; gap: 6px; }
    .badge { min-width: 15px; height: 15px; border-radius: 8px; background: #dddefc; color: #2b2fc0; font-size: 10px; font-weight: 700; line-height: 15px; margin-right: 2px; }
    .sq { width: 31px; }
    .zoom { display: flex; align-items: center; justify-content: space-between; width: 112px; padding: 0 8px 0 7px; }
    .full { width: 39px; }
  `];
  render() {
    return html`<footer class="bar">
      <div class="left"><button aria-label="Outline">${icon(g.list, 18)}</button><button aria-label="Page grid">${icon(g.tiles, 18)}</button>
        <button class="page">Page 1 ${icon(g.caret, 8, 6)}</button><button aria-label="Add page">${icon(g.addRound, 18)}</button></div>
      <div class="right">
        <button class="sel">${icon(g.select, 19, 18)}<span>Selected objects</span><span class="badge">0</span>${icon(g.caret, 8, 6)}</button>
        <button class="sq" aria-label="Layers">${icon(g.layers, 18)}</button>
        <button class="sq" aria-label="Guide">${icon(g.compass, 18)}</button>
        <div class="zoom"><button aria-label="Zoom out">${icon(g.minus, 14)}</button><span>55%</span><button aria-label="Zoom in">${icon(g.plusBig, 14)}</button></div>
        <button class="full" aria-label="Full screen">${icon(g.full, 18)}</button>
      </div></footer>`;
  }
}

@customElement("app-root")
class AppRoot extends LitElement {
  static styles = css`
    :host { display: flex; flex-direction: column; height: 100vh; overflow: hidden; }
    .work { flex: 1; min-height: 0; display: flex; }
  `;
  render() {
    return html`<browser-chrome></browser-chrome><doc-header></doc-header><format-bar></format-bar>
      <div class="work"><shape-panel></shape-panel><diagram-canvas></diagram-canvas></div>
      <status-bar></status-bar>`;
  }
}
